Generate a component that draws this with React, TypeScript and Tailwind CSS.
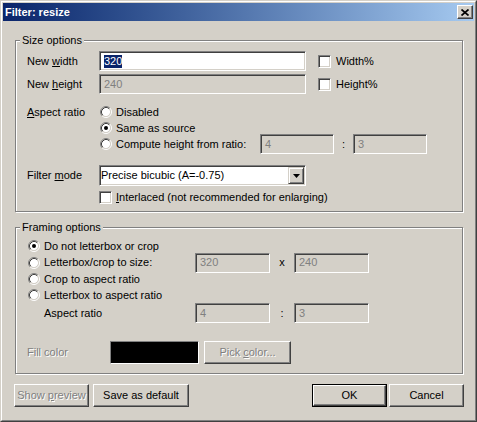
import type { ReactNode } from 'react';

// Windows classic 3D edges
const sunken =
  'border border-t-[#808080] border-l-[#808080] border-b-white border-r-white shadow-[inset_1px_1px_0_#404040,inset_-1px_-1px_0_#d4d0c8]';
const raised =
  'border border-t-white border-l-white border-r-[#404040] border-b-[#404040] shadow-[inset_-1px_-1px_0_#808080]';
const raisedSmall =
  'border border-t-[#d4d0c8] border-l-[#d4d0c8] border-r-[#404040] border-b-[#404040] shadow-[inset_1px_1px_0_#fff,inset_-1px_-1px_0_#808080]';
const embossed = 'text-[#808080] [text-shadow:1px_1px_0_#fff]';

function Radio({ checked = false }: { checked?: boolean }) {
  return (
    <svg width="12" height="12" viewBox="0 0 12 12" className="shrink-0 ml-px">
      <circle cx="6" cy="6" r="4.2" fill="#fff" />
      <path d="M2.11 9.89A5.5 5.5 0 0 1 9.89 2.11" fill="none" stroke="#808080" />
      <path d="M9.89 2.11A5.5 5.5 0 0 1 2.11 9.89" fill="none" stroke="#fff" />
      <path d="M2.82 9.18A4.5 4.5 0 0 1 9.18 2.82" fill="none" stroke="#404040" />
      <path d="M9.18 2.82A4.5 4.5 0 0 1 2.82 9.18" fill="none" stroke="#d4d0c8" />
      {checked && <circle cx="6" cy="6" r="2" fill="#000" />}
    </svg>
  );
}

function Check({ className = '' }: { className?: string }) {
  return <span className={`block shrink-0 w-[13px] h-[13px] bg-white ${sunken} ${className}`} />;
}

function Field({
  className = '',
  disabled = false,
  children,
}: {
  className?: string;
  disabled?: boolean;
  children?: ReactNode;
}) {
  return (
    <div
      className={`shrink-0 h-[20px] flex items-center pl-[4px] ${sunken} ${
        disabled ? 'bg-[#d4d0c8] text-[#808080]' : 'bg-white'
      } ${className}`}
    >
      {children}
    </div>
  );
}

function Button({
  className = '',
  disabled = false,
  isDefault = false,
  children,
}: {
  className?: string;
  disabled?: boolean;
  isDefault?: boolean;
  children: ReactNode;
}) {
  const face = (
    <div
      className={`h-full w-full flex items-center justify-center bg-[#d4d0c8] ${raised} ${
        disabled ? embossed : ''
      }`}
    >
      {children}
    </div>
  );
  if (isDefault) {
    return <div className={`shrink-0 h-[23px] border border-black ${className}`}>{face}</div>;
  }
  return <div className={`shrink-0 h-[23px] ${className}`}>{face}</div>;
}

function GroupBox({
  title,
  className = '',
  children,
}: {
  title: string;
  className?: string;
  children: ReactNode;
}) {
  return (
    <div
      className={`relative shrink-0 ml-[12px] w-[448px] border border-[#808080] shadow-[inset_1px_1px_0_#fff,1px_1px_0_#fff] ${className}`}
    >
      <span className="absolute left-[4px] top-[-7px] px-[2px] bg-[#d4d0c8]">{title}</span>
      {children}
    </div>
  );
}

export default function App() {
  return (
    <div className="w-[477px] h-[422px] bg-[#d4d0c8] border border-t-[#d4d0c8] border-l-[#d4d0c8] border-r-[#404040] border-b-[#404040] font-['Liberation_Sans',Arial,sans-serif] text-[11px] leading-[13px] text-black select-none">
      <div className="h-full flex flex-col border border-t-white border-l-white border-r-[#808080] border-b-[#808080] p-px">
        {/* Title bar */}
        <div className="h-[18px] shrink-0 flex items-center justify-between pl-[2px] pr-px bg-linear-to-r from-[#0a246a] to-[#a6caf0]">
          <span className="font-bold text-white">Filter: resize</span>
          <div className={`w-[16px] h-[14px] flex items-center justify-center bg-[#d4d0c8] ${raised}`}>
            <svg width="8" height="7" viewBox="0 0 8 7">
              <path d="M0.5 0.5L7.5 6.5M7.5 0.5L0.5 6.5" stroke="#000" strokeWidth="1.7" />
            </svg>
          </div>
        </div>

        {/* Size options */}
        <GroupBox title="Size options" className="mt-[19px] h-[172px] pt-[10px] pl-[11px]">
          <div className="flex items-center h-[20px]">
            <span className="w-[72px]">
              New <span className="underline">w</span>idth
            </span>
            <Field className="w-[207px]">
              <span className="bg-[#0a246a] text-white">320</span>
            </Field>
            <Check className="ml-[12px]" />
            <span className="ml-[5px]">Width%</span>
          </div>
          <div className="flex items-center h-[20px] mt-[3px]">
            <span className="w-[72px]">
              New <span className="underline">h</span>eight
            </span>
            <Field disabled className="w-[207px]">
              240
            </Field>
            <Check className="ml-[12px]" />
            <span className="ml-[5px]">Height%</span>
          </div>

          <div className="flex mt-[10px]">
            <span className="w-[72px] h-[16px] flex items-center">
              <span className="underline">A</span>spect ratio
            </span>
            <div className="flex flex-col">
              <div className="h-[16px] flex items-center">
                <Radio />
                <span className="ml-[4px]">Disabled</span>
              </div>
              <div className="h-[16px] flex items-center">
                <Radio checked />
                <span className="ml-[4px]">Same as source</span>
              </div>
              <div className="h-[16px] flex items-center">
                <Radio />
                <span className="ml-[4px] w-[144px]">Compute height from ratio:</span>
                <Field disabled className="w-[74px]">
                  4
                </Field>
                <span className="w-[19px] text-center">:</span>
                <Field disabled className="w-[74px]">
                  3
                </Field>
              </div>
            </div>
          </div>

          <div className="flex items-center h-[21px] mt-[13px]">
            <span className="w-[72px]">
              Filter <span className="underline">m</span>ode
            </span>
            <div className={`w-[207px] h-[21px] flex items-center bg-white ${sunken}`}>
              <span className="flex-1 pl-px">Precise bicubic (A=-0.75)</span>
              <div
                className={`mr-px w-[16px] h-[17px] flex items-center justify-center bg-[#d4d0c8] ${raisedSmall}`}
              >
                <svg width="7" height="4" viewBox="0 0 7 4">
                  <path d="M0 0H7L3.5 4Z" fill="#000" />
                </svg>
              </div>
            </div>
          </div>

          <div className="flex items-center h-[13px] mt-[5px]">
            <span className="w-[72px]" />
            <Check />
            <span className="ml-[4px]">
              <span className="underline">I</span>nterlaced (not recommended for enlarging)
            </span>
          </div>
        </GroupBox>

        {/* Framing options */}
        <GroupBox title="Framing options" className="mt-[15px] h-[147px] pt-[10px] pl-[11px]">
          <div className="h-[16px] flex items-center">
            <Radio checked />
            <span className="ml-[4px]">Do not letterbox or crop</span>
          </div>
          <div className="h-[17px] flex items-center">
            <Radio />
            <span className="ml-[4px] w-[151px]">Letterbox/crop to size:</span>
            <Field disabled className="w-[75px]">
              320
            </Field>
            <span className="w-[24px] text-center">x</span>
            <Field disabled className="w-[75px]">
              240
            </Field>
          </div>
          <div className="h-[16px] flex items-center">
            <Radio />
            <span className="ml-[4px]">Crop to aspect ratio</span>
          </div>
          <div className="h-[16px] flex items-center">
            <Radio />
            <span className="ml-[4px]">Letterbox to aspect ratio</span>
          </div>
          <div className="h-[20px] flex items-center">
            <span className="ml-[17px] w-[151px]">Aspect ratio</span>
            <Field disabled className="w-[75px]">
              4
            </Field>
            <span className="w-[24px] text-center">:</span>
            <Field disabled className="w-[75px]">
              3
            </Field>
          </div>

          <div className="h-[23px] mt-[18px] flex items-center">
            <span className={`w-[83px] ${embossed}`}>Fill color</span>
            <div className="shrink-0 w-[89px] h-[23px] bg-black border border-t-[#808080] border-l-[#808080] border-b-white border-r-white" />
            <Button disabled className="ml-[5px] w-[87px]">
              <span>
                Pick <span className="underline">c</span>olor...
              </span>
            </Button>
          </div>
        </GroupBox>

        {/* Dialog buttons */}
        <div className="h-[23px] mt-[10px] flex pl-[11px] pr-[10px]">
          <Button disabled className="w-[75px]">
            <span>
              Show <span className="underline">p</span>review
            </span>
          </Button>
          <Button className="ml-[4px] w-[96px]">Save as default</Button>
          <div className="flex-1" />
          <Button isDefault className="w-[75px]">
            OK
          </Button>
          <Button className="ml-[2px] w-[75px]">Cancel</Button>
        </div>
      </div>
    </div>
  );
}
